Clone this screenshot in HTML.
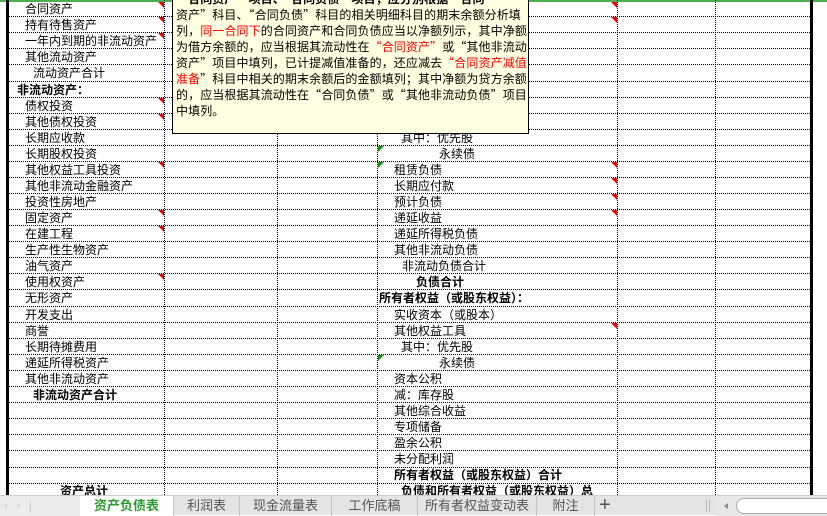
<!DOCTYPE html>
<html><head><meta charset="utf-8"><style>
*{margin:0;padding:0;box-sizing:border-box}
body{width:827px;height:515px;overflow:hidden;background:#fff;font-family:"Liberation Sans","Noto Sans CJK SC",sans-serif;font-size:12px;color:#000;position:relative}
.hl{position:absolute;left:8px;width:804px;height:0;border-top:1px dotted #000}
.vl{position:absolute;top:0;height:495px;width:0;border-left:1px dotted #000}
.t{position:absolute;white-space:nowrap;line-height:16px;height:16px}
.b{font-weight:bold}
.rt{position:absolute;width:0;height:0;border-top:6px solid #e00;border-left:6px solid transparent}
.gt{position:absolute;width:0;height:0;border-top:6px solid #1a8a1a;border-right:6px solid transparent}
#cm{position:absolute;left:172px;top:-10px;width:357px;height:144px;background:#ffffe1;border:1px solid #000;padding:0 3px;font-family:"Noto Sans CJK SC",sans-serif;font-size:12px;line-height:16px;overflow:hidden;white-space:nowrap;letter-spacing:0.1px}
#cm .r{color:#f00}
#tabs{position:absolute;left:0;top:495px;width:827px;height:20px;background:#e4e4e4;border-top:1px solid #cfcfcf}
.tab{position:absolute;top:0;height:20px;line-height:19px;text-align:center;color:#555;font-size:13px;border-right:1px solid #c4c4c4}
</style></head><body>
<div style="position:absolute;left:0;top:0;width:827px;height:2px;background:#4caf50"></div>
<div style="position:absolute;left:6px;top:0;width:3px;height:495px;background:#000"></div>
<div style="position:absolute;left:810px;top:0;width:3px;height:495px;background:#000"></div>
<div class="vl" style="left:164px"></div>
<div class="vl" style="left:277px"></div>
<div class="vl" style="left:377px"></div>
<div class="vl" style="left:617px"></div>
<div class="vl" style="left:715px"></div>
<div class="hl" style="top:16px"></div><div class="hl" style="top:32px"></div><div class="hl" style="top:48px"></div><div class="hl" style="top:64px"></div><div class="hl" style="top:81px"></div><div class="hl" style="top:97px"></div><div class="hl" style="top:113px"></div><div class="hl" style="top:129px"></div><div class="hl" style="top:145px"></div><div class="hl" style="top:161px"></div><div class="hl" style="top:177px"></div><div class="hl" style="top:193px"></div><div class="hl" style="top:209px"></div><div class="hl" style="top:225px"></div><div class="hl" style="top:241px"></div><div class="hl" style="top:257px"></div><div class="hl" style="top:273px"></div><div class="hl" style="top:289px"></div><div class="hl" style="top:306px"></div><div class="hl" style="top:322px"></div><div class="hl" style="top:338px"></div><div class="hl" style="top:354px"></div><div class="hl" style="top:370px"></div><div class="hl" style="top:386px"></div><div class="hl" style="top:402px"></div><div class="hl" style="top:418px"></div><div class="hl" style="top:434px"></div><div class="hl" style="top:450px"></div><div class="hl" style="top:467px"></div><div class="hl" style="top:483px"></div>

<div class="t" style="left:25px;top:1px">合同资产</div>
<div class="t" style="left:25px;top:17px">持有待售资产</div>
<div class="t" style="left:25px;top:33px">一年内到期的非流动资产</div>
<div class="t" style="left:25px;top:49px">其他流动资产</div>
<div class="t" style="left:33px;top:65px">流动资产合计</div>
<div class="t b" style="left:17px;top:82px">非流动资产：</div>
<div class="t" style="left:25px;top:98px">债权投资</div>
<div class="t" style="left:25px;top:114px">其他债权投资</div>
<div class="t" style="left:25px;top:130px">长期应收款</div>
<div class="t" style="left:25px;top:146px">长期股权投资</div>
<div class="t" style="left:25px;top:162px">其他权益工具投资</div>
<div class="t" style="left:25px;top:178px">其他非流动金融资产</div>
<div class="t" style="left:25px;top:194px">投资性房地产</div>
<div class="t" style="left:25px;top:210px">固定资产</div>
<div class="t" style="left:25px;top:226px">在建工程</div>
<div class="t" style="left:25px;top:242px">生产性生物资产</div>
<div class="t" style="left:25px;top:258px">油气资产</div>
<div class="t" style="left:25px;top:274px">使用权资产</div>
<div class="t" style="left:25px;top:290px">无形资产</div>
<div class="t" style="left:25px;top:307px">开发支出</div>
<div class="t" style="left:25px;top:323px">商誉</div>
<div class="t" style="left:25px;top:339px">长期待摊费用</div>
<div class="t" style="left:25px;top:355px">递延所得税资产</div>
<div class="t" style="left:25px;top:371px">其他非流动资产</div>
<div class="t b" style="left:33px;top:387px">非流动资产合计</div>
<div class="t b" style="left:60px;top:483px">资产总计</div>

<div class="t" style="left:401px;top:130px">其中：优先股</div>
<div class="t" style="left:439px;top:146px">永续债</div>
<div class="t" style="left:394px;top:162px">租赁负债</div>
<div class="t" style="left:394px;top:178px">长期应付款</div>
<div class="t" style="left:394px;top:194px">预计负债</div>
<div class="t" style="left:394px;top:210px">递延收益</div>
<div class="t" style="left:394px;top:226px">递延所得税负债</div>
<div class="t" style="left:394px;top:242px">其他非流动负债</div>
<div class="t" style="left:402px;top:258px">非流动负债合计</div>
<div class="t b" style="left:416px;top:274px">负债合计</div>
<div class="t b" style="left:379px;top:290px">所有者权益（或股东权益）：</div>
<div class="t" style="left:394px;top:307px">实收资本（或股本）</div>
<div class="t" style="left:394px;top:323px">其他权益工具</div>
<div class="t" style="left:401px;top:339px">其中：优先股</div>
<div class="t" style="left:439px;top:355px">永续债</div>
<div class="t" style="left:394px;top:371px">资本公积</div>
<div class="t" style="left:394px;top:387px">减：库存股</div>
<div class="t" style="left:394px;top:403px">其他综合收益</div>
<div class="t" style="left:394px;top:419px">专项储备</div>
<div class="t" style="left:394px;top:435px">盈余公积</div>
<div class="t" style="left:394px;top:451px">未分配利润</div>
<div class="t b" style="left:394px;top:467px">所有者权益（或股东权益）合计</div>
<div class="t b" style="left:401px;top:483px">负债和所有者权益（或股东权益）总</div>

<div class="rt" style="left:158px;top:2px"></div>
<div class="rt" style="left:158px;top:17px"></div>
<div class="rt" style="left:158px;top:33px"></div>
<div class="rt" style="left:158px;top:114px"></div>
<div class="rt" style="left:158px;top:98px"></div>
<div class="rt" style="left:158px;top:162px"></div>
<div class="rt" style="left:158px;top:210px"></div>
<div class="rt" style="left:158px;top:226px"></div>
<div class="rt" style="left:158px;top:274px"></div>
<div class="rt" style="left:611px;top:2px"></div>
<div class="rt" style="left:611px;top:17px"></div>
<div class="rt" style="left:611px;top:162px"></div>
<div class="rt" style="left:611px;top:178px"></div>
<div class="rt" style="left:611px;top:194px"></div>
<div class="rt" style="left:611px;top:210px"></div>
<div class="rt" style="left:611px;top:323px"></div>
<div class="gt" style="left:378px;top:146px"></div>
<div class="gt" style="left:378px;top:162px"></div>
<div class="gt" style="left:378px;top:355px"></div>

<div id="cm">
<div class="b">“合同资产”项目、“合同负债”项目，应分别根据“合同</div>
<div>资产”科目、“合同负债”科目的相关明细科目的期末余额分析填</div>
<div>列，<span class="r">同一合同下</span>的合同资产和合同负债应当以净额列示，其中净额</div>
<div>为借方余额的，应当根据其流动性在<span class="r">“合同资产”</span>或“其他非流动</div>
<div>资产”项目中填列，已计提减值准备的，还应减去<span class="r">“合同资产减值</span></div>
<div><span class="r">准备</span>”科目中相关的期末余额后的金额填列；其中净额为贷方余额</div>
<div>的，应当根据其流动性在“合同负债”或“其他非流动负债”项目</div>
<div>中填列。</div>
</div>

<div id="tabs">
<div style="position:absolute;left:0;top:0;width:80px;height:20px;background:#ececec;color:#ccc;font-size:13px;line-height:19px;padding-left:4px;letter-spacing:8px">‹›|</div>
<div class="tab" style="left:80px;width:94px;background:#fff;color:#2e9a2e;font-weight:bold">资产负债表</div>
<div class="tab" style="left:174px;width:66px">利润表</div>
<div class="tab" style="left:240px;width:92px">现金流量表</div>
<div class="tab" style="left:332px;width:86px">工作底稿</div>
<div class="tab" style="left:418px;width:119px">所有者权益变动表</div>
<div class="tab" style="left:537px;width:58px">附注</div>
<div style="position:absolute;left:599px;top:-2px;font-size:20px;color:#555;line-height:22px">+</div>
<div style="position:absolute;left:706px;top:4px;width:1px;height:12px;background:#bbb"></div>
<div style="position:absolute;left:709px;top:4px;width:1px;height:12px;background:#bbb"></div>
<div style="position:absolute;left:716px;top:0;width:111px;height:20px;background:#e8e8e8"></div>
<div style="position:absolute;left:724px;top:7px;width:0;height:0;border-right:4px solid #888;border-top:3px solid transparent;border-bottom:3px solid transparent"></div>
<div style="position:absolute;left:736px;top:2px;width:100px;height:16px;background:#fff;border:1px solid #aaa;border-radius:8px"></div>
</div>
</body></html>
